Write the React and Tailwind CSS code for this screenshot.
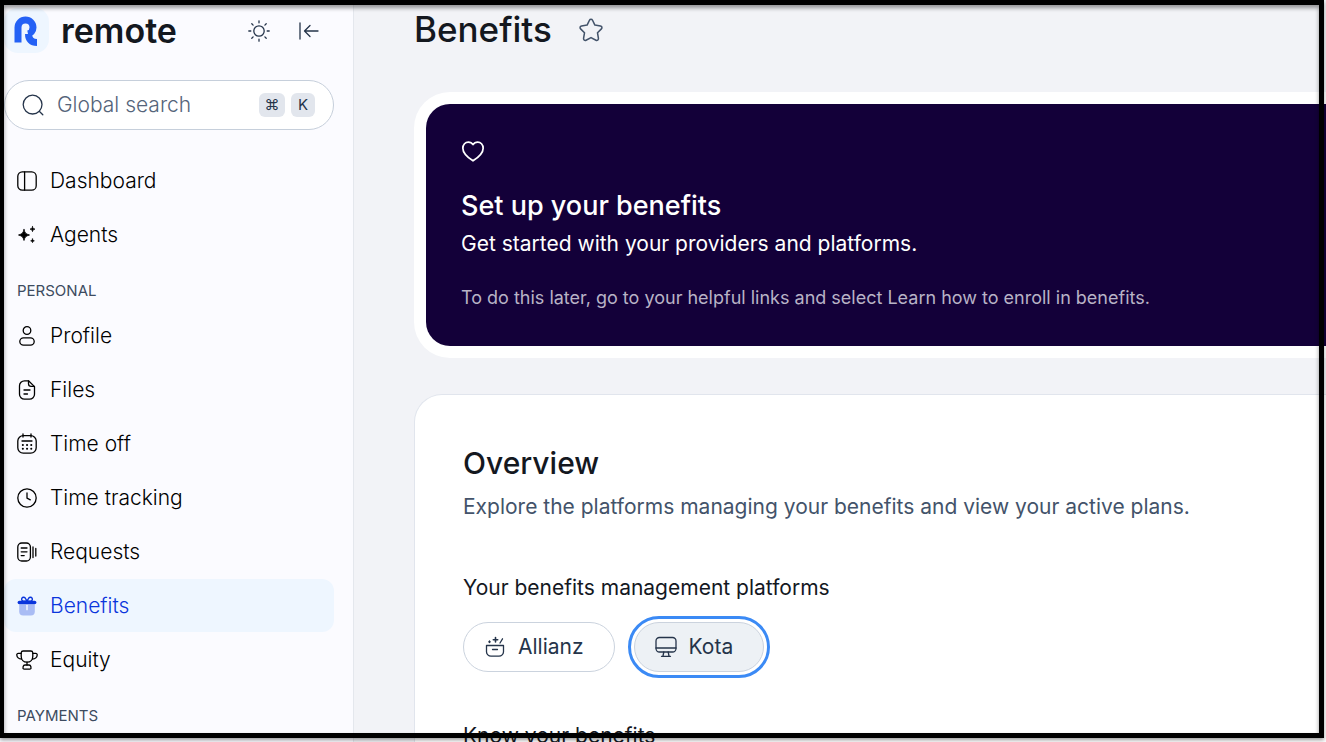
import { useState } from 'react'

function Icon({ size = 22, children, ...rest }) {
  return (
    <svg
      width={size}
      height={size}
      viewBox="0 0 22 22"
      fill="none"
      stroke="currentColor"
      strokeWidth="1.3"
      strokeLinecap="round"
      strokeLinejoin="round"
      aria-hidden="true"
      className="shrink-0"
      {...rest}
    >
      {children}
    </svg>
  )
}

const icons = {
  dashboard: (
    <Icon>
      <rect x="1.8" y="1.8" width="18.4" height="18.4" rx="4.5" />
      <path d="M8.6 2v18" />
    </Icon>
  ),
  agents: (
    <Icon fill="currentColor" strokeWidth="0.8">
      <path d="M8 5.500c.9 3.500 1.700 4.400 5.500 5.500-3.800 1.100-4.600 2-5.500 5.500-.9-3.500-1.700-4.400-5.500-5.500 3.800-1.100 4.600-2 5.500-5.500z" />
      <path d="M16.500 2.700c.4 1.600.8 2 2.400 2.400-1.600.5-2 .9-2.400 2.500-.4-1.600-.8-2-2.400-2.500 1.600-.4 2-.8 2.400-2.400z" />
      <path d="M16.500 15c.4 1.200.7 1.500 1.800 1.800-1.100.4-1.400.7-1.800 1.800-.4-1.100-.7-1.400-1.800-1.800 1.100-.3 1.400-.6 1.800-1.800z" />
    </Icon>
  ),
  profile: (
    <Icon>
      <circle cx="11" cy="5.5" r="3.8" />
      <rect x="3.8" y="12.8" width="14.4" height="7.4" rx="3.7" />
    </Icon>
  ),
  files: (
    <Icon>
      <path d="M12.500 1.800H8.500A5 5 0 0 0 3.500 6.800v8.400A5 5 0 0 0 8.500 20.200h5a5 5 0 0 0 5-5V7.600z" />
      <path d="M12.500 1.800v3a2.600 2.600 0 0 0 2.600 2.600h3.200M8 11h6M8 15h3.500" />
    </Icon>
  ),
  timeOff: (
    <Icon>
      <rect x="1.8" y="2.6" width="18.4" height="17.6" rx="5.5" />
      <path d="M7 1v3M15 1v3M6 8h10" />
      <path d="M6.800 12h.1M11 12h.1M15.200 12h.1M6.800 15.800h.1M11 15.800h.1M15.200 15.800h.1" strokeWidth="2" />
    </Icon>
  ),
  timeTracking: (
    <Icon>
      <circle cx="11" cy="11" r="9.2" />
      <path d="M11 6v5.200l3.300 1.600" />
    </Icon>
  ),
  requests: (
    <Icon>
      <rect x="1.8" y="2" width="12.6" height="18" rx="4" />
      <path d="M5.200 7h5.800M5.200 10.800h5.800M5.200 14.600h3M17 6v10.500M19.800 7.500v7.500" />
    </Icon>
  ),
  benefits: (
    <Icon stroke="none" fill="currentColor">
      <path d="M3.200 9.500h15.600v7a4 4 0 0 1-4 4H7.200a4 4 0 0 1-4-4z" opacity=".3" />
      <path d="M11 10.200v4.500" stroke="#fff" strokeWidth="1.3" />
      <rect x="1.6" y="5.800" width="18.8" height="3.5" rx="1.7" />
      <path
        d="M11 6.200H7.200a2 2 0 1 1 2-3.200L11 6.200zm0 0h3.800a2 2 0 1 0-2-3.200L11 6.200z"
        fill="none"
        stroke="currentColor"
        strokeWidth="1.4"
      />
    </Icon>
  ),
  equity: (
    <Icon>
      <path d="M5.200 3.800A2 2 0 0 1 7.200 2h7.600a2 2 0 0 1 2 1.800v3.400c0 3.500-2.300 5.900-5.800 5.900s-5.800-2.400-5.800-5.900z" />
      <path d="M5.200 4.300H2.300A1.500 1.500 0 0 0 .8 6c.2 2.300 2.100 3.900 4.800 4M16.800 4.300h2.900A1.500 1.500 0 0 1 21.200 6c-.2 2.300-2.100 3.900-4.800 4M11 13.100V16" />
      <path d="M9 16h4a2 2 0 0 1 1.800 1.500l.2 1a1.300 1.300 0 0 1-1.300 1.700H8.300A1.300 1.300 0 0 1 7 18.500l.2-1A2 2 0 0 1 9 16z" />
    </Icon>
  ),
}

const mainLinks = [
  { label: 'Dashboard', icon: icons.dashboard },
  { label: 'Agents', icon: icons.agents },
]

const personalLinks = [
  { label: 'Profile', icon: icons.profile },
  { label: 'Files', icon: icons.files },
  { label: 'Time off', icon: icons.timeOff },
  { label: 'Time tracking', icon: icons.timeTracking },
  { label: 'Requests', icon: icons.requests },
  { label: 'Benefits', icon: icons.benefits, active: true },
  { label: 'Equity', icon: icons.equity },
]

const platforms = [
  {
    name: 'Allianz',
    icon: (
      <Icon>
        <path d="M2.500 9.500h17v6.200a4.500 4.500 0 0 1-4.500 4.500H7a4.500 4.500 0 0 1-4.500-4.500zM8.500 13.500h5M16 7l2.500-4.200" />
        <path d="M11.500 1.500v4.400M9.300 3.700h4.400" strokeWidth="1.6" />
        <path d="M5.500 5v1.600M4.700 5.800h1.600" />
      </Icon>
    ),
  },
  {
    name: 'Kota',
    icon: (
      <Icon>
        <rect x="1" y="1.5" width="20" height="14.5" rx="3.5" />
        <path d="M1 12h20M8.800 16l-.8 4M13.200 16l.8 4M6.500 20.300h9" />
      </Icon>
    ),
  },
]

function NavLink({ label, icon, active }) {
  return (
    <li>
      <a
        href={`#${label}`}
        aria-current={active ? 'page' : undefined}
        className={`flex h-[53px] items-center gap-3 rounded-xl pl-3 text-[21px] font-light ${
          active ? 'bg-[#eef6ff] text-[#0a35dc]' : 'text-black hover:bg-slate-100'
        }`}
      >
        {icon}
        {label}
      </a>
    </li>
  )
}

function Sidebar() {
  return (
    <aside className="flex w-[354px] shrink-0 flex-col border-r border-[#e4e7ed] bg-[#fbfbff] pr-[19px] pl-1">
      <div className="mt-2 flex h-[45px] items-center">
        <span className="flex size-[45px] items-center rounded-[14px] bg-[#eef6ff] pl-2.5">
          <svg width="24" height="30" viewBox="0 0 24 30" fill="none" aria-hidden="true">
            <path
              d="M4 26.500V11.500a7.500 7.500 0 0 1 15 0c0 3.500-2.500 6-5 6.500M23 26.500c-5.500 0-8.500-3-8.500-8.500"
              stroke="#2461f5"
              strokeWidth="7"
            />
          </svg>
        </span>
        <span className="ml-3 text-[34px] leading-9 font-semibold text-[#14181f]">remote</span>
        <div className="ml-auto flex items-center gap-7 pr-3.5 text-[#25344a]">
          <button type="button" aria-label="Toggle theme">
            <Icon>
              <circle cx="11" cy="11" r="5.2" />
              <path d="M11 .8v2M11 19.200v2M.8 11h2M19.200 11h2M3.800 3.800l1.300 1.300M16.900 16.900l1.300 1.300M3.800 18.200l1.300-1.300M16.900 5.100l1.300-1.300" />
            </Icon>
          </button>
          <button type="button" aria-label="Collapse sidebar">
            <Icon>
              <path d="M2 3v16M20 11H6.500M12 5.500 6.500 11l5.500 5.500" />
            </Icon>
          </button>
        </div>
      </div>

      <label className="mt-[27px] flex h-[50px] shrink-0 items-center rounded-full border border-[#c6cfdb] bg-white pr-[18px] pl-[17px] text-[#25344a]">
        <Icon>
          <circle cx="10.6" cy="10.6" r="9.4" />
          <path d="m17.500 17.500 3.300 3.300" />
        </Icon>
        <input
          type="search"
          aria-label="Global search"
          placeholder="Global search"
          className="ml-[13px] min-w-0 flex-1 bg-transparent text-[21px] font-light outline-none placeholder:text-[#55647a]"
        />
        <kbd className="flex h-6 w-[26px] items-center justify-center rounded-md bg-[#e2e6ed] font-['Inter','DejaVu_Sans',sans-serif] text-[15px]">⌘</kbd>
        <kbd className="ml-1.5 flex size-6 items-center justify-center rounded-md bg-[#e2e6ed] font-['Inter',sans-serif] text-[15px]">K</kbd>
      </label>

      <nav className="mt-6">
        <ul className="flex flex-col gap-px">
          {mainLinks.map((link) => (
            <NavLink key={link.label} {...link} />
          ))}
        </ul>
        <h2 className="mt-5 mb-2 pl-[13px] text-[15px] leading-5 text-[#3d4b60]">PERSONAL</h2>
        <ul className="flex flex-col gap-px">
          {personalLinks.map((link) => (
            <NavLink key={link.label} {...link} />
          ))}
        </ul>
        <h2 className="mt-5 mb-2 pl-[13px] text-[15px] leading-5 text-[#3d4b60]">PAYMENTS</h2>
      </nav>
    </aside>
  )
}

export default function App() {
  const [selected, setSelected] = useState('Kota')

  return (
    <div className="relative flex h-screen overflow-hidden bg-[#f2f3f7] font-['Inter',sans-serif] text-[#14181f]">
      <Sidebar />

      <main className="min-w-0 flex-1 pl-[60px]">
        <header className="mt-[7px] flex h-11 items-center gap-[26px]">
          <h1 className="text-[35px] leading-10 font-medium">Benefits</h1>
          <button type="button" aria-label="Add to favourites" className="pt-1 text-[#43536a]">
            <Icon size={26}>
              <path d="M9.700 1.900a1.450 1.450 0 0 1 2.600 0l2 4.100 4.700.7a1.450 1.450 0 0 1 .8 2.500l-3.300 3.300.8 4.800a1.450 1.450 0 0 1-2.100 1.500L11 16.600l-4.200 2.200a1.450 1.450 0 0 1-2.100-1.500l.8-4.800-3.300-3.300A1.450 1.450 0 0 1 3 6.700L7.700 6z" />
            </Icon>
          </button>
        </header>

        {/* Setup banner */}
        <section className="mt-[41px] rounded-l-[36px] bg-white py-3 pl-3">
          <div className="rounded-l-3xl bg-[#130039] px-[35px] pt-[35px] pb-9 text-white">
            <Icon size={24} strokeWidth="1.6">
              <path d="M11 20c-2.800-1.800-9.300-6-9.300-11.600 0-3.300 2.300-5.600 5-5.600 1.900 0 3.400.9 4.300 2.300.9-1.400 2.400-2.300 4.300-2.300 2.700 0 5 2.300 5 5.600C20.300 14 13.800 18.200 11 20z" />
            </Icon>
            <h2 className="mt-[27px] text-[27px] leading-8 font-medium">Set up your benefits</h2>
            <p className="mt-2 text-[21px] leading-7">Get started with your providers and platforms.</p>
            <p className="mt-7 text-[18px] leading-6 text-[#b8b3c6]">
              To do this later, go to your helpful links and select Learn how to enroll in benefits.
            </p>
          </div>
        </section>

        {/* Overview card */}
        <section className="mt-9 rounded-tl-[28px] border-t border-l border-[#e1e5ed] bg-white px-12 pt-[50px] pb-12">
          <h2 className="text-[30px] leading-9 font-medium">Overview</h2>
          <p className="mt-3 text-[21px] leading-7 text-[#43536a]">
            Explore the platforms managing your benefits and view your active plans.
          </p>
          <h3 className="mt-[53px] text-[21px] leading-7">Your benefits management platforms</h3>
          <div className="mt-5 flex gap-[19px]">
            {platforms.map((p) => (
              <button
                key={p.name}
                type="button"
                aria-pressed={selected === p.name}
                onClick={() => setSelected(p.name)}
                className={`flex h-[50px] items-center gap-3 rounded-full border border-[#cbd3de] pr-[30px] pl-5 text-[21px] text-[#25344a] ${
                  selected === p.name ? 'bg-[#edf1f5] outline-3 outline-offset-3 outline-[#3b8af5]' : 'bg-white'
                }`}
              >
                {p.icon}
                {p.name}
              </button>
            ))}
          </div>
          <h3 className="mt-[50px] text-[21px] leading-7">Know your benefits</h3>
        </section>
      </main>

      {/* Window frame */}
      <div className="pointer-events-none absolute top-0 right-[2px] bottom-1 left-0 border-[5px] border-l-4 border-black shadow-[0_2px_4px_rgba(0,0,0,0.4),inset_0_3px_4px_rgba(0,0,0,0.4)]" />
    </div>
  )
}
